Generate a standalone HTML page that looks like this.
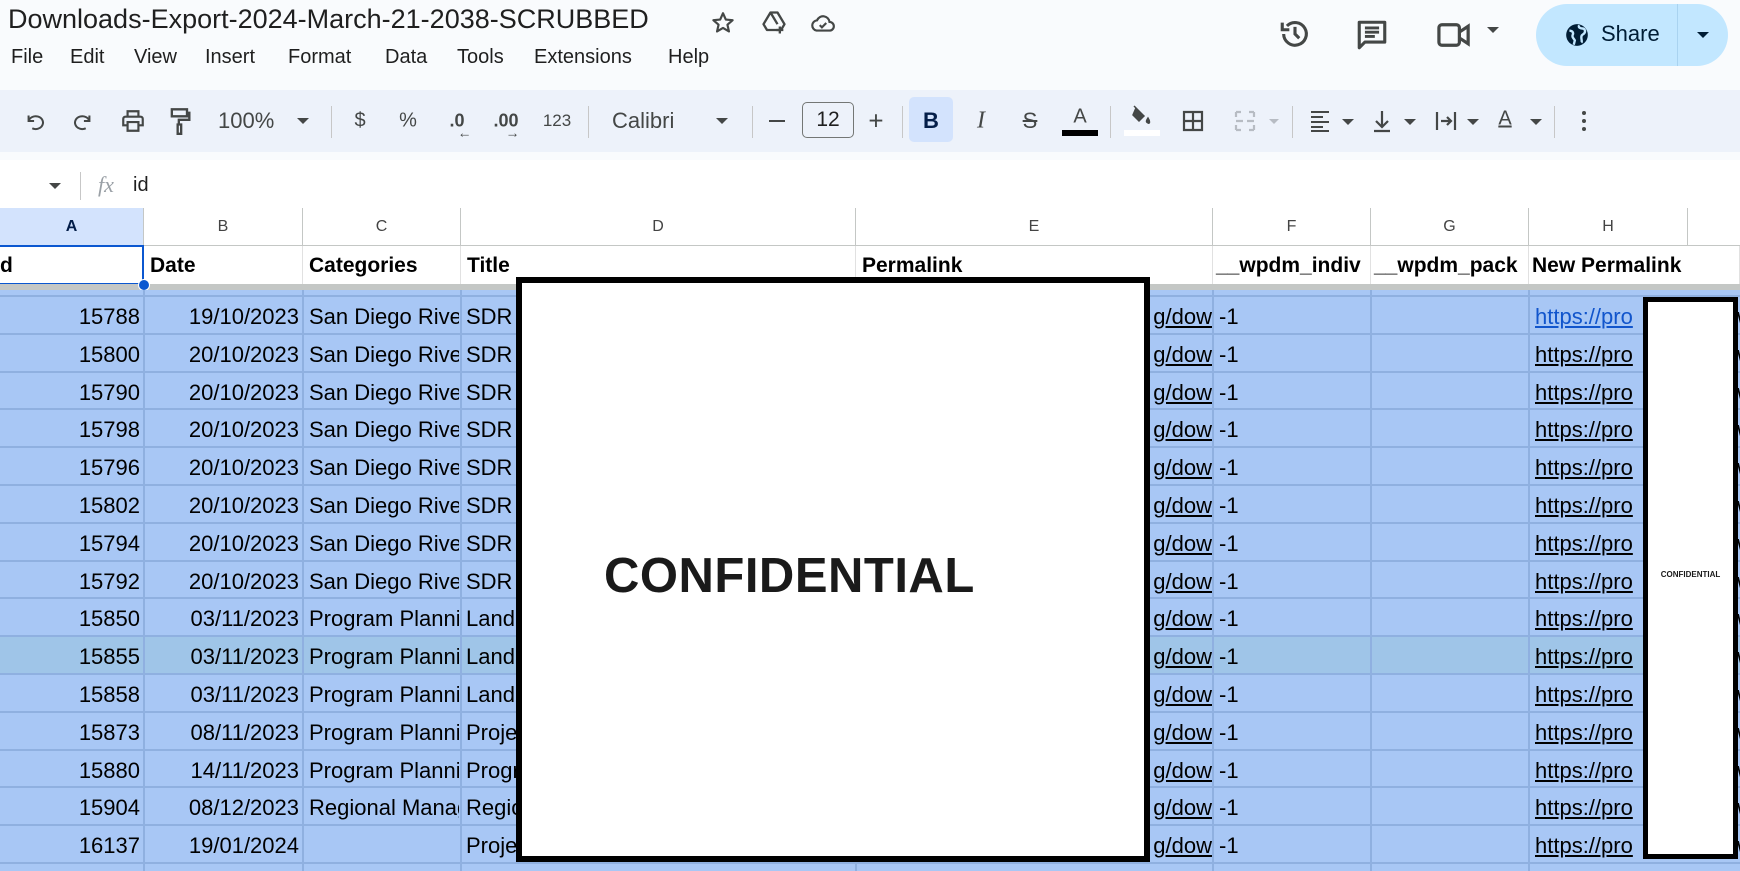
<!DOCTYPE html>
<html><head><meta charset="utf-8">
<style>
*{margin:0;padding:0;box-sizing:border-box}
body{width:1740px;height:871px;overflow:hidden;background:#f9fbfd;font-family:"Liberation Sans",sans-serif;position:relative;color:#1f1f1f}
.a{position:absolute;white-space:nowrap}
.menu span{position:absolute;top:46px;font-size:20px;color:#1f1f1f}
.tb{position:absolute;left:0;top:90px;width:1740px;height:62px;background:#edf2fa}
.ic{position:absolute;top:121px;transform:translate(-50%,-50%);color:#444746;font-size:20px}
.div{position:absolute;top:106px;width:1px;height:32px;background:#c7c7c7}
.colh{position:absolute;top:208px;height:38px;border-right:1px solid #c4c7c5;border-bottom:1px solid #c4c7c5;background:#fff;font-size:16px;color:#444;text-align:center;line-height:38px}
.hr{position:absolute;top:246px;height:38px;border-right:1px solid #e1e1e1;background:#fff;font-weight:bold;font-size:21px;line-height:40px;padding-left:6px;overflow:hidden;white-space:nowrap;color:#000}
.rows{position:absolute;left:0;top:290px;width:1740px;height:581px;background:#a8c7f5}
.row{position:absolute;left:0;width:1740px;height:37.8px;border-bottom:2px solid #8fb0e0;font-size:22px;color:#000}
.row div{position:absolute;top:0;height:36px;line-height:40px;overflow:hidden;white-space:nowrap}
.vl{position:absolute;top:290px;width:2px;height:581px;background:#8fb0e0}
u{text-decoration:underline}
</style></head><body>
<div class="a" style="left:8px;top:4px;font-size:27px;color:#1f1f1f">Downloads-Export-2024-March-21-2038-SCRUBBED</div>
<svg class="a" style="left:710px;top:10px" width="26" height="26" viewBox="0 0 24 24"><path d="M12 3l2.6 5.8 6.3.6-4.8 4.2 1.4 6.2L12 16.6 6.5 19.8l1.4-6.2L3.1 9.4l6.3-.6z" fill="none" stroke="#444746" stroke-width="2" stroke-linejoin="round"/></svg>
<svg class="a" style="left:760px;top:9px" width="28" height="28" viewBox="0 0 24 24"><path d="M9 3h6l6 10-3 5H6l-3-5z M9 3l6 10" fill="none" stroke="#444746" stroke-width="2" stroke-linejoin="round"/><path d="M17 15v6M14 18h6" stroke="#444746" stroke-width="2"/></svg>
<svg class="a" style="left:809px;top:10px" width="28" height="26" viewBox="0 0 24 24"><path d="M6 19h12a4 4 0 0 0 0-8 6 6 0 0 0-11.5-1.5A4.8 4.8 0 0 0 6 19z" fill="none" stroke="#444746" stroke-width="2"/><path d="M9 14l2 2 4-4" fill="none" stroke="#444746" stroke-width="2"/></svg>
<div class="menu"><span style="left:11px">File</span><span style="left:70px">Edit</span><span style="left:134px">View</span><span style="left:205px">Insert</span><span style="left:288px">Format</span><span style="left:385px">Data</span><span style="left:457px">Tools</span><span style="left:534px">Extensions</span><span style="left:668px">Help</span></div>
<svg class="a" style="left:1278px;top:17px" width="34" height="34" viewBox="0 0 24 24"><path d="M4 12a8 8 0 1 0 2.3-5.7" fill="none" stroke="#444746" stroke-width="2.2"/><path d="M3 4v5h5" fill="none" stroke="#444746" stroke-width="2.2"/><path d="M12 7v5l3 3" fill="none" stroke="#444746" stroke-width="2.2"/></svg>
<svg class="a" style="left:1355px;top:18px" width="34" height="34" viewBox="0 0 24 24"><path d="M3 3h18v14H7l-4 4z M3 17V3" fill="none" stroke="#444746" stroke-width="2.2" stroke-linejoin="round"/><path d="M7 7h10M7 10h10M7 13h7" stroke="#444746" stroke-width="2"/></svg>
<svg class="a" style="left:1436px;top:20px" width="38" height="30" viewBox="0 0 26 20"><rect x="2" y="3" width="14" height="14" rx="2" fill="none" stroke="#444746" stroke-width="2.2"/><path d="M16 8l6-4v12l-6-4" fill="none" stroke="#444746" stroke-width="2.2"/></svg>
<div class="a" style="left:1487px;top:27px;border-left:6px solid transparent;border-right:6px solid transparent;border-top:6px solid #444746"></div>
<div class="a" style="left:1536px;top:4px;width:192px;height:62px;border-radius:31px;background:#c2e7ff"></div>
<div class="a" style="left:1677px;top:4px;width:1px;height:62px;background:#a9d3f0"></div>
<svg class="a" style="left:1564px;top:22px" width="26" height="26" viewBox="0 0 24 24"><circle cx="12" cy="12" r="10" fill="#001d35"/><path d="M5 8c3 0 4 2 3 4s1 3 2 5l-1 4M14 3c-1 2 1 3 3 3s3 2 2 4-3 1-3 4 1 4 0 5" fill="none" stroke="#c2e7ff" stroke-width="2.2"/></svg>
<div class="a" style="left:1601px;top:21px;font-size:22px;color:#001d35">Share</div>
<div class="a" style="left:1697px;top:32px;border-left:6px solid transparent;border-right:6px solid transparent;border-top:6px solid #001d35"></div>
<div class="tb"></div>
<svg class="a" style="left:24px;top:110px" width="22" height="22" viewBox="0 0 24 24"><path d="M5 6v6h6M5 12a8 7 0 1 1 4 8" fill="none" stroke="#444746" stroke-width="2.2"/></svg>
<svg class="a" style="left:72px;top:110px" width="22" height="22" viewBox="0 0 24 24"><path d="M19 6v6h-6M19 12a8 7 0 1 0-4 8" fill="none" stroke="#444746" stroke-width="2.2"/></svg>
<svg class="a" style="left:120px;top:108px" width="26" height="26" viewBox="0 0 24 24"><path d="M7 8V3h10v5M5 8h14a2 2 0 0 1 2 2v6h-4M7 16H3v-6a2 2 0 0 1 2-2M7 13h10v8H7z" fill="none" stroke="#444746" stroke-width="2"/></svg>
<svg class="a" style="left:168px;top:107px" width="24" height="28" viewBox="0 0 20 24"><path d="M3 2h13v6H3zM16 5h2v6H9v4M8 15h3v8H8z" fill="none" stroke="#444746" stroke-width="2"/></svg>
<div class="a" style="left:218px;top:108px;font-size:22px;color:#444746">100%</div>
<div class="a" style="left:297px;top:118px;border-left:6px solid transparent;border-right:6px solid transparent;border-top:6px solid #444746"></div>
<div class="div" style="left:331px"></div>
<div class="ic" style="left:360px">$</div>
<div class="ic" style="left:408px">%</div>
<div class="ic" style="left:457px;font-weight:bold;font-size:18px">.0<span style="position:absolute;left:8px;top:14px;font-size:14px">←</span></div>
<div class="ic" style="left:506px;font-weight:bold;font-size:18px">.00<span style="position:absolute;left:12px;top:14px;font-size:14px">→</span></div>
<div class="ic" style="left:557px;font-size:17px">123</div>
<div class="div" style="left:588px"></div>
<div class="a" style="left:612px;top:108px;font-size:22px;color:#444746">Calibri</div>
<div class="a" style="left:716px;top:118px;border-left:6px solid transparent;border-right:6px solid transparent;border-top:6px solid #444746"></div>
<div class="div" style="left:752px"></div>
<div class="a" style="left:769px;top:120px;width:16px;height:2px;background:#444746"></div>
<div class="a" style="left:802px;top:102px;width:52px;height:36px;border:1px solid #747775;border-radius:5px;font-size:21px;text-align:center;line-height:34px;color:#1f1f1f">12</div>
<div class="ic" style="left:876px;font-size:26px">+</div>
<div class="div" style="left:902px"></div>
<div class="a" style="left:909px;top:97px;width:44px;height:45px;border-radius:5px;background:#d3e3fd"></div>
<div class="ic" style="left:931px;font-weight:bold;font-size:22px;color:#041e49">B</div>
<div class="ic" style="left:981px;font-style:italic;font-size:24px;font-family:'Liberation Serif',serif">I</div>
<div class="ic" style="left:1030px;font-size:22px;text-decoration:line-through">S</div>
<div class="ic" style="left:1080px;top:117px;font-size:20px">A</div>
<div class="a" style="left:1062px;top:130px;width:36px;height:6px;background:#000"></div>
<div class="div" style="left:1110px"></div>
<svg class="a" style="left:1129px;top:104px" width="26" height="24" viewBox="0 0 24 24"><path d="M6 4l8 8-5 5-6-6zM6 4l-2-2M18 14c-2 3-2 4 0 5s2-2 0-5z" fill="#444746" stroke="#444746" stroke-width="1.5"/></svg>
<div class="a" style="left:1124px;top:130px;width:36px;height:6px;background:#fff"></div>
<svg class="a" style="left:1181px;top:109px" width="24" height="24" viewBox="0 0 24 24"><path d="M3 3h18v18H3zM12 3v18M3 12h18" fill="none" stroke="#444746" stroke-width="2.2"/></svg>
<svg class="a" style="left:1233px;top:109px" width="24" height="24" viewBox="0 0 24 24"><path d="M3 3h5M3 3v5M21 3h-5M21 3v5M3 21h5M3 21v-5M21 21h-5M21 21v-5M3 12h7M21 12h-7" fill="none" stroke="#b7bcc3" stroke-width="2.2"/></svg>
<div class="a" style="left:1269px;top:119px;border-left:5px solid transparent;border-right:5px solid transparent;border-top:5px solid #b7bcc3"></div>
<div class="div" style="left:1292px"></div>
<svg class="a" style="left:1308px;top:109px" width="24" height="24" viewBox="0 0 24 24"><path d="M3 3h18M3 8h12M3 13h18M3 18h12M3 22h18" stroke="#444746" stroke-width="2"/></svg>
<div class="a" style="left:1342px;top:119px;border-left:6px solid transparent;border-right:6px solid transparent;border-top:6px solid #444746"></div>
<svg class="a" style="left:1370px;top:108px" width="24" height="26" viewBox="0 0 24 24"><path d="M12 2v16M6 12l6 6 6-6M4 22h16" fill="none" stroke="#444746" stroke-width="2.2"/></svg>
<div class="a" style="left:1404px;top:119px;border-left:6px solid transparent;border-right:6px solid transparent;border-top:6px solid #444746"></div>
<svg class="a" style="left:1434px;top:108px" width="24" height="26" viewBox="0 0 24 24"><path d="M3 3v18M21 3v18M7 12h10M13 8l4 4-4 4" fill="none" stroke="#444746" stroke-width="2.2"/></svg>
<div class="a" style="left:1467px;top:119px;border-left:6px solid transparent;border-right:6px solid transparent;border-top:6px solid #444746"></div>
<div class="ic" style="left:1505px;top:119px;font-size:20px;text-decoration:underline">A</div>
<div class="a" style="left:1530px;top:119px;border-left:6px solid transparent;border-right:6px solid transparent;border-top:6px solid #444746"></div>
<div class="div" style="left:1554px"></div>
<div class="a" style="left:1582px;top:111px;width:4px;height:4px;border-radius:2px;background:#444746;box-shadow:0 8px 0 #444746,0 16px 0 #444746"></div>
<div class="a" style="left:0;top:160px;width:1740px;height:48px;background:#fff"></div>
<div class="a" style="left:49px;top:183px;border-left:6px solid transparent;border-right:6px solid transparent;border-top:6px solid #444746"></div>
<div class="a" style="left:80px;top:172px;width:1px;height:28px;background:#c7c7c7"></div>
<div class="a" style="left:98px;top:172px;font-size:22px;font-style:italic;color:#9aa0a6;font-family:'Liberation Serif',serif">fx</div>
<div class="a" style="left:133px;top:174px;font-size:20px">id</div>
<div class="colh" style="left:0;width:144px;background:#d3e3fd;color:#041e49;font-weight:bold">A</div>
<div class="colh" style="left:144px;width:159px">B</div>
<div class="colh" style="left:303px;width:158px">C</div>
<div class="colh" style="left:461px;width:395px">D</div>
<div class="colh" style="left:856px;width:357px">E</div>
<div class="colh" style="left:1213px;width:158px">F</div>
<div class="colh" style="left:1371px;width:158px">G</div>
<div class="colh" style="left:1529px;width:159px">H</div>
<div class="colh" style="left:1688px;width:60px"></div>
<div class="hr" style="left:0;width:144px;padding-left:0">d</div>
<div class="hr" style="left:144px;width:159px">Date</div>
<div class="hr" style="left:303px;width:158px">Categories</div>
<div class="hr" style="left:461px;width:395px">Title</div>
<div class="hr" style="left:856px;width:357px">Permalink</div>
<div class="hr" style="left:1213px;width:158px;padding-left:3px">__wpdm_indiv</div>
<div class="hr" style="left:1371px;width:158px;padding-left:3px">__wpdm_pack</div>
<div class="hr" style="left:1529px;width:211px;padding-left:3px">New Permalink</div>
<div class="a" style="left:0;top:245px;width:144px;height:40px;border:2px solid #0b57d0;border-left:none"></div>
<div class="a" style="left:0;top:284px;width:1740px;height:6px;background:#c4c7c5"></div>
<div class="a" style="left:138px;top:279px;width:12px;height:12px;border-radius:6px;background:#0b57d0;border:1px solid #fff"></div>
<div class="rows"></div>
<div class="a" style="left:0;top:290px;width:1740px;height:7px;background:#a8c7f5;border-bottom:2px solid #8fb0e0"></div>
<div style="position:absolute;left:0;top:297px;width:1740px;height:574px">
<div class="row" style="top:0"><div style="left:0;width:140px;text-align:right">15788</div><div style="left:144px;width:155px;text-align:right">19/10/2023</div><div style="left:309px;width:150px">San Diego River</div><div style="left:466px;width:50px">SDR</div><div style="left:1150px;width:62px;text-align:right"><u>g/dow</u></div><div style="left:1219px">-1</div><div style="left:1535px;width:110px;color:#1155cc"><u>https://pro</u></div><div style="left:1737px">w</div></div>
<div class="row" style="top:37.8px"><div style="left:0;width:140px;text-align:right">15800</div><div style="left:144px;width:155px;text-align:right">20/10/2023</div><div style="left:309px;width:150px">San Diego River</div><div style="left:466px;width:50px">SDR</div><div style="left:1150px;width:62px;text-align:right"><u>g/dow</u></div><div style="left:1219px">-1</div><div style="left:1535px;width:110px"><u>https://pro</u></div><div style="left:1737px">w</div></div>
<div class="row" style="top:75.6px"><div style="left:0;width:140px;text-align:right">15790</div><div style="left:144px;width:155px;text-align:right">20/10/2023</div><div style="left:309px;width:150px">San Diego River</div><div style="left:466px;width:50px">SDR</div><div style="left:1150px;width:62px;text-align:right"><u>g/dow</u></div><div style="left:1219px">-1</div><div style="left:1535px;width:110px"><u>https://pro</u></div><div style="left:1737px">w</div></div>
<div class="row" style="top:113.4px"><div style="left:0;width:140px;text-align:right">15798</div><div style="left:144px;width:155px;text-align:right">20/10/2023</div><div style="left:309px;width:150px">San Diego River</div><div style="left:466px;width:50px">SDR</div><div style="left:1150px;width:62px;text-align:right"><u>g/dow</u></div><div style="left:1219px">-1</div><div style="left:1535px;width:110px"><u>https://pro</u></div><div style="left:1737px">w</div></div>
<div class="row" style="top:151.2px"><div style="left:0;width:140px;text-align:right">15796</div><div style="left:144px;width:155px;text-align:right">20/10/2023</div><div style="left:309px;width:150px">San Diego River</div><div style="left:466px;width:50px">SDR</div><div style="left:1150px;width:62px;text-align:right"><u>g/dow</u></div><div style="left:1219px">-1</div><div style="left:1535px;width:110px"><u>https://pro</u></div><div style="left:1737px">w</div></div>
<div class="row" style="top:189px"><div style="left:0;width:140px;text-align:right">15802</div><div style="left:144px;width:155px;text-align:right">20/10/2023</div><div style="left:309px;width:150px">San Diego River</div><div style="left:466px;width:50px">SDR</div><div style="left:1150px;width:62px;text-align:right"><u>g/dow</u></div><div style="left:1219px">-1</div><div style="left:1535px;width:110px"><u>https://pro</u></div><div style="left:1737px">w</div></div>
<div class="row" style="top:226.8px"><div style="left:0;width:140px;text-align:right">15794</div><div style="left:144px;width:155px;text-align:right">20/10/2023</div><div style="left:309px;width:150px">San Diego River</div><div style="left:466px;width:50px">SDR</div><div style="left:1150px;width:62px;text-align:right"><u>g/dow</u></div><div style="left:1219px">-1</div><div style="left:1535px;width:110px"><u>https://pro</u></div><div style="left:1737px">w</div></div>
<div class="row" style="top:264.6px"><div style="left:0;width:140px;text-align:right">15792</div><div style="left:144px;width:155px;text-align:right">20/10/2023</div><div style="left:309px;width:150px">San Diego River</div><div style="left:466px;width:50px">SDR</div><div style="left:1150px;width:62px;text-align:right"><u>g/dow</u></div><div style="left:1219px">-1</div><div style="left:1535px;width:110px"><u>https://pro</u></div><div style="left:1737px">w</div></div>
<div class="row" style="top:302.4px"><div style="left:0;width:140px;text-align:right">15850</div><div style="left:144px;width:155px;text-align:right">03/11/2023</div><div style="left:309px;width:150px">Program Planning</div><div style="left:466px;width:50px">Land</div><div style="left:1150px;width:62px;text-align:right"><u>g/dow</u></div><div style="left:1219px">-1</div><div style="left:1535px;width:110px"><u>https://pro</u></div><div style="left:1737px">w</div></div>
<div class="row" style="top:340.2px;background:#9fc5e8"><div style="left:0;width:140px;text-align:right">15855</div><div style="left:144px;width:155px;text-align:right">03/11/2023</div><div style="left:309px;width:150px">Program Planning</div><div style="left:466px;width:50px">Land</div><div style="left:1150px;width:62px;text-align:right"><u>g/dow</u></div><div style="left:1219px">-1</div><div style="left:1535px;width:110px"><u>https://pro</u></div><div style="left:1737px">w</div></div>
<div class="row" style="top:378px"><div style="left:0;width:140px;text-align:right">15858</div><div style="left:144px;width:155px;text-align:right">03/11/2023</div><div style="left:309px;width:150px">Program Planning</div><div style="left:466px;width:50px">Land</div><div style="left:1150px;width:62px;text-align:right"><u>g/dow</u></div><div style="left:1219px">-1</div><div style="left:1535px;width:110px"><u>https://pro</u></div><div style="left:1737px">w</div></div>
<div class="row" style="top:415.8px"><div style="left:0;width:140px;text-align:right">15873</div><div style="left:144px;width:155px;text-align:right">08/11/2023</div><div style="left:309px;width:150px">Program Planning</div><div style="left:466px;width:50px">Project</div><div style="left:1150px;width:62px;text-align:right"><u>g/dow</u></div><div style="left:1219px">-1</div><div style="left:1535px;width:110px"><u>https://pro</u></div><div style="left:1737px">w</div></div>
<div class="row" style="top:453.6px"><div style="left:0;width:140px;text-align:right">15880</div><div style="left:144px;width:155px;text-align:right">14/11/2023</div><div style="left:309px;width:150px">Program Planning</div><div style="left:466px;width:50px">Program</div><div style="left:1150px;width:62px;text-align:right"><u>g/dow</u></div><div style="left:1219px">-1</div><div style="left:1535px;width:110px"><u>https://pro</u></div><div style="left:1737px">w</div></div>
<div class="row" style="top:491.4px"><div style="left:0;width:140px;text-align:right">15904</div><div style="left:144px;width:155px;text-align:right">08/12/2023</div><div style="left:309px;width:150px">Regional Management</div><div style="left:466px;width:50px">Region</div><div style="left:1150px;width:62px;text-align:right"><u>g/dow</u></div><div style="left:1219px">-1</div><div style="left:1535px;width:110px"><u>https://pro</u></div><div style="left:1737px">w</div></div>
<div class="row" style="top:529.2px"><div style="left:0;width:140px;text-align:right">16137</div><div style="left:144px;width:155px;text-align:right">19/01/2024</div><div style="left:466px;width:50px">Project</div><div style="left:1150px;width:62px;text-align:right"><u>g/dow</u></div><div style="left:1219px">-1</div><div style="left:1535px;width:110px"><u>https://pro</u></div><div style="left:1737px">w</div></div>
</div>
<div class="vl" style="left:143px"></div><div class="vl" style="left:302px"></div><div class="vl" style="left:460px"></div><div class="vl" style="left:855px"></div><div class="vl" style="left:1212px"></div><div class="vl" style="left:1370px"></div><div class="vl" style="left:1528px"></div>
<div class="a" style="left:516px;top:277px;width:634px;height:585px;background:#fff;border:6px solid #000"></div>
<div class="a" style="left:604px;top:548px;font-weight:bold;font-size:49px;color:#1a1a1a;letter-spacing:0.5px">CONFIDENTIAL</div>
<div class="a" style="left:1643px;top:297px;width:95px;height:562px;background:#fff;border:5px solid #000"></div>
<div class="a" style="left:1643px;top:570px;width:95px;text-align:center;font-weight:bold;font-size:8px;color:#1a1a1a">CONFIDENTIAL</div>
</body></html>
